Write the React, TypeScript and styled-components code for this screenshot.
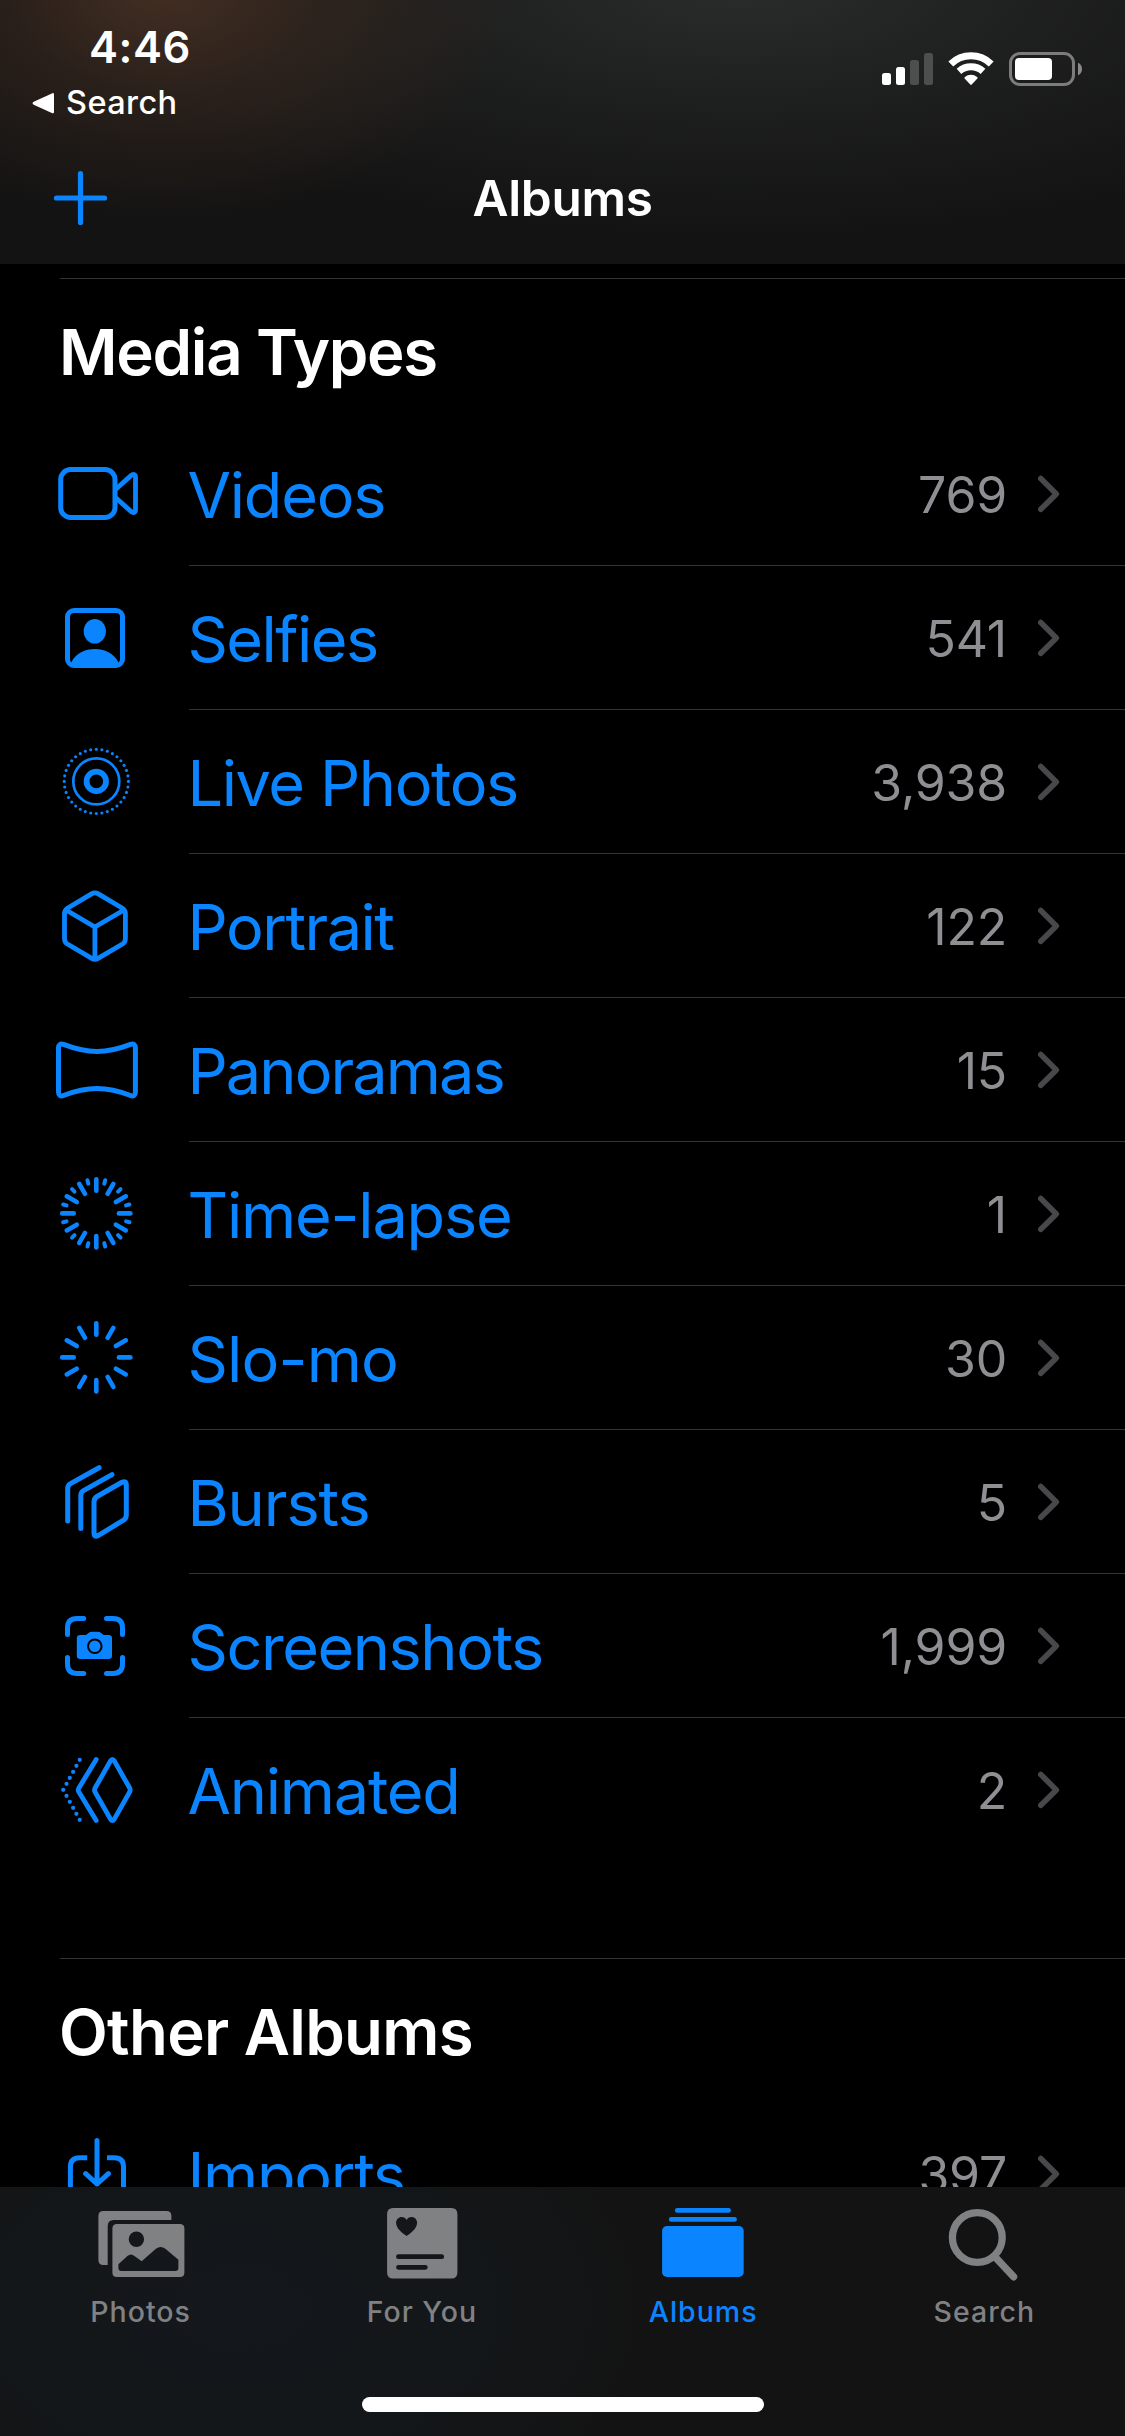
import React from "react";
import styled, { createGlobalStyle } from "styled-components";

const BLUE = "#0a84ff";

const GlobalStyle = createGlobalStyle`
  body { margin: 0; background: #000; }
  * { box-sizing: border-box; }
`;

const Screen = styled.div`
  width: 1125px;
  height: 2436px;
  display: flex;
  flex-direction: column;
  overflow: hidden;
  background: #000;
  color: #fff;
  font-family: Inter, "Liberation Sans", sans-serif;
  white-space: nowrap;
`;

const Header = styled.header`
  flex: none;
  height: 264px;
  display: flex;
  flex-direction: column;
  background:
    radial-gradient(ellipse 350px 235px at 165px -12px, rgba(67, 46, 34, 1), rgba(60, 42, 32, 0.55) 45%, rgba(40, 32, 26, 0) 100%),
    radial-gradient(ellipse 700px 250px at 740px -10px, rgba(42, 44, 43, 1), rgba(38, 40, 39, 0.5) 50%, rgba(28, 29, 28, 0) 100%),
    #131313;
`;

const StatusBar = styled.div`
  height: 132px;
  display: flex;
  justify-content: space-between;
`;

const StatusLeft = styled.div`
  display: flex;
  flex-direction: column;
`;

const Clock = styled.div`
  margin: 21px 0 0 89px;
  line-height: 52px;
  font-size: 43.5px;
  font-weight: 600;
  letter-spacing: 0.6px;
`;

const BackLink = styled.div`
  display: flex;
  align-items: center;
  gap: 11px;
  margin: 9px 0 0 32px;
  line-height: 41px;
  font-size: 32.5px;
  font-weight: 500;
  letter-spacing: 0.4px;
`;

const StatusIcons = styled.svg`
  display: block;
  width: 255px;
  height: 100px;
`;

const NavBar = styled.div`
  height: 132px;
  display: grid;
  grid-template-columns: 189px 1fr 189px;
`;

const PlusIcon = styled.svg`
  display: block;
  width: 189px;
  height: 132px;
`;

const NavTitle = styled.h1`
  margin: 0;
  padding-top: 36px;
  line-height: 60px;
  font-size: 49.5px;
  font-weight: 600;
  letter-spacing: -0.3px;
  text-align: center;
`;

const Content = styled.main`
  flex: 1;
  min-height: 0;
  overflow: hidden;
  padding-top: 14px;
`;

const Section = styled.section<{ $gap?: number }>`
  margin-bottom: ${(p) => p.$gap ?? 0}px;
`;

const SectionTitle = styled.h2<{ $tracking: number }>`
  height: 144px;
  margin: 0 0 0 60px;
  padding-top: 33px;
  border-top: 1px solid #333335;
  line-height: 80px;
  font-size: 63.5px;
  font-weight: 600;
  text-indent: -1px;
  letter-spacing: ${(p) => p.$tracking}px;
`;

const Row = styled.div`
  height: 144px;
  display: grid;
  grid-template-columns: 189px 1fr;
`;

const RowBody = styled.div<{ $last?: boolean }>`
  height: 144px;
  display: flex;
  align-items: flex-start;
  border-bottom: 1px solid ${(p) => (p.$last ? "transparent" : "#333335")};
`;

const RowIcon = styled.svg`
  display: block;
  width: 189px;
  height: 144px;
  fill: none;
  stroke: ${BLUE};
  stroke-width: 5;
  stroke-linecap: round;
  stroke-linejoin: round;
`;

const Label = styled.div<{ $tracking: number }>`
  flex: 1;
  line-height: 146px;
  font-size: 63px;
  text-indent: -1.5px;
  color: ${BLUE};
  letter-spacing: ${(p) => p.$tracking}px;
`;

const Count = styled.div`
  line-height: 146px;
  font-size: 50px;
  letter-spacing: -0.2px;
  color: #8e8e93;
`;

const Chevron = styled.svg`
  display: block;
  width: 118px;
  height: 143px;
`;

const TabBar = styled.nav`
  flex: none;
  height: 249px;
  display: flex;
  flex-direction: column;
  align-items: center;
  background:
    radial-gradient(ellipse 430px 270px at 240px 120px, rgba(20, 24, 29, 1), rgba(19, 24, 27, 0.8) 50%, rgba(19, 19, 19, 0) 100%),
    #131313;
`;

const Tabs = styled.div`
  width: 100%;
  height: 210px;
  display: grid;
  grid-template-columns: repeat(4, 1fr);
`;

const Tab = styled.div<{ $active?: boolean }>`
  display: flex;
  flex-direction: column;
  align-items: center;
  color: ${(p) => (p.$active ? BLUE : "#808183")};
`;

const TabIcon = styled.svg`
  display: block;
  width: 120px;
  height: 104px;
  fill: currentColor;
`;

const TabLabel = styled.div`
  line-height: 41px;
  font-size: 28.5px;
  font-weight: 500;
  letter-spacing: 1px;
`;

const HomeIndicator = styled.div`
  width: 402px;
  height: 15px;
  border-radius: 8px;
  background: #fff;
`;

const spoke = (angle: number, from: number, to: number) => {
  const a = (angle * Math.PI) / 180;
  return {
    x1: 96.3 + from * Math.sin(a),
    y1: 71.4 - from * Math.cos(a),
    x2: 96.3 + to * Math.sin(a),
    y2: 71.4 - to * Math.cos(a),
  };
};

const LongSpokes = () => (
  <>
    {Array.from({ length: 12 }, (_, i) => (
      <line key={i} {...spoke(i * 30, 22.6, 34.1)} strokeWidth={4.6} />
    ))}
  </>
);

const icons: Record<string, React.ReactNode> = {
  videos: (
    <>
      <rect x="60.7" y="47.5" width="54.3" height="48" rx="10" />
      <path d="M116 67 L131 53.6 C133.2 51.7 135.5 52.3 135.5 55 V88 C135.5 90.7 133.2 91.3 131 89.4 L116 76" strokeWidth="4.8" />
    </>
  ),
  selfies: (
    <>
      <rect x="67.5" y="44.5" width="55" height="55" rx="6.5" />
      <ellipse cx="94.8" cy="65.3" rx="11.1" ry="12.3" fill={BLUE} stroke="none" />
      <path d="M71.5 96 C76 87 85 83 94.8 83 C104.6 83 113.6 87 118.2 96 L119.5 100 H70 Z" fill={BLUE} stroke="none" />
    </>
  ),
  live: (
    <>
      {Array.from({ length: 36 }, (_, i) => {
        const p = spoke(i * 10, 0, 32.1);
        return <circle key={i} cx={p.x2} cy={p.y2} r="1.55" fill={BLUE} stroke="none" />;
      })}
      <circle cx="96.3" cy="71.4" r="23" strokeWidth="2.7" />
      <circle cx="96.3" cy="71.4" r="9.7" strokeWidth="5.8" />
    </>
  ),
  portrait: (
    <path
      strokeWidth="4.8"
      d="M91.5 39.9 Q94.9 37.9 98.3 39.9 L122.5 54.3 Q125.4 56.1 125.4 60 V84.5 Q125.4 88.2 122.5 90 L98 104.4 Q94.9 106.4 91.8 104.4 L67.4 90 Q64.5 88.2 64.5 84.5 V60 Q64.5 56.1 67.4 54.3 Z M66 56 L94.9 73 L124 56 M94.9 73 V105"
    />
  ),
  panoramas: (
    <path d="M58.5 50 C58.5 46.5 60.5 45.3 63.5 46.4 C75 50.8 84 53.5 97 53.5 C110 53.5 119 50.8 130.5 46.4 C133.5 45.3 135.4 46.5 135.4 50 V94 C135.4 97.5 133.5 98.6 130.5 97.5 C119 93 110 90.5 97 90.5 C84 90.5 75 93 63.5 97.5 C60.5 98.6 58.5 97.5 58.5 94 Z" />
  ),
  timelapse: (
    <>
      <LongSpokes />
      {Array.from({ length: 12 }, (_, i) => (
        <line key={i} {...spoke(i * 30 + 15, 30.8, 34.3)} strokeWidth={4} />
      ))}
    </>
  ),
  slomo: <LongSpokes />,
  bursts: (
    <path d="M99.1 37.7 L70.5 53.6 Q67.7 55.2 67.7 58.5 V91 M112 44.6 L83.5 60.6 Q80.8 62.2 80.8 65.5 V98.5 M97 66.5 L121.5 52.5 Q126.3 50 126.3 55.2 V85 Q126.3 88.5 123.5 90.2 L98.5 105.3 Q94 107.8 94 103 V72 Q94 68.3 97 66.5 Z" />
  ),
  screenshots: (
    <>
      <path d="M67.5 60.5 V54 Q67.5 44.5 77 44.5 H83.7 M106.5 44.5 H113 Q122.5 44.5 122.5 54 V60.5 M122.5 83.5 V90 Q122.5 99.5 113 99.5 H106.5 M83.7 99.5 H77 Q67.5 99.5 67.5 90 V83.5" />
      <path d="M80.3 61 H86 L88.8 58.7 Q90 57.7 92 57.7 H97.6 Q99.6 57.7 100.8 58.7 L103.6 61 H108.7 Q112 61 112 64.3 V81.7 Q112 85 108.7 85 H80.3 Q76.8 85 76.8 81.7 V64.3 Q76.8 61 80.3 61 Z" fill={BLUE} stroke="none" />
      <circle cx="94.8" cy="72.3" r="6.8" stroke="#000" strokeWidth="2" />
    </>
  ),
  animated: (
    <>
      <path
        strokeWidth="4.8"
        d="M110.5 42.9 Q112.4 40 114.3 42.9 L129.5 69.8 Q130.8 72 129.5 74.2 L114.3 101.1 Q112.4 104 110.5 101.1 L95.2 74.2 Q93.9 72 95.2 69.8 Z M96.2 41.5 L78.9 69.9 Q77.6 72 78.9 74.1 L96.2 102.5"
      />
      {Array.from({ length: 11 }, (_, i) => (
        <circle key={i} cx={63.2 + Math.abs(i - 5) * 3.3} cy={41.8 + i * 6} r="2.1" fill={BLUE} stroke="none" />
      ))}
    </>
  ),
  imports: (
    <>
      <path d="M87.2 55.7 H79.5 Q70.4 55.7 70.4 65 V106 H123.5 V65 Q123.5 55.7 114.5 55.7 H107" strokeLinecap="butt" />
      <path d="M97 38.5 V82 M85.7 71.7 L97 82 L108.4 71.7" />
    </>
  ),
};

type Item = { icon: string; label: string; count: string; tracking: number };

const mediaTypes: Item[] = [
  { icon: "videos", label: "Videos", count: "769", tracking: -1.2 },
  { icon: "selfies", label: "Selfies", count: "541", tracking: -1.55 },
  { icon: "live", label: "Live Photos", count: "3,938", tracking: -1.4 },
  { icon: "portrait", label: "Portrait", count: "122", tracking: -1.5 },
  { icon: "panoramas", label: "Panoramas", count: "15", tracking: -1.9 },
  { icon: "timelapse", label: "Time-lapse", count: "1", tracking: -1.2 },
  { icon: "slomo", label: "Slo-mo", count: "30", tracking: -0.8 },
  { icon: "bursts", label: "Bursts", count: "5", tracking: -1.1 },
  { icon: "screenshots", label: "Screenshots", count: "1,999", tracking: -1.45 },
  { icon: "animated", label: "Animated", count: "2", tracking: -1.2 },
];

const otherAlbums: Item[] = [{ icon: "imports", label: "Imports", count: "397", tracking: -1.3 }];

const AlbumRow = ({ item, last }: { item: Item; last?: boolean }) => (
  <Row>
    <RowIcon viewBox="0 0 189 144">{icons[item.icon]}</RowIcon>
    <RowBody $last={last}>
      <Label $tracking={item.tracking}>{item.label}</Label>
      <Count>{item.count}</Count>
      <Chevron viewBox="0 0 118 143" fill="none" stroke="#48484b" strokeWidth="5.6" strokeLinecap="round" strokeLinejoin="round">
        <path d="M33.8 56.5 L49.3 71.9 L33.8 87.3" />
      </Chevron>
    </RowBody>
  </Row>
);

export default function App() {
  return (
    <>
      <GlobalStyle />
      <Screen>
        <Header>
          <StatusBar>
            <StatusLeft>
              <Clock>4:46</Clock>
              <BackLink>
                <svg width="23" height="24" viewBox="0 0 23 24" fill="#fff">
                  <path d="M20.4 2.2 Q22 1.7 22 3.5 V21 Q22 22.8 20.4 22.2 L1.7 13.7 Q-0.6 12.2 1.7 10.7 Z" />
                </svg>
                Search
              </BackLink>
            </StatusLeft>
            <StatusIcons viewBox="870 0 255 100">
              <rect x="882" y="73" width="9" height="12" rx="2.5" fill="#fff" />
              <rect x="896" y="67" width="9" height="18" rx="2.5" fill="#fff" />
              <rect x="910" y="60" width="9" height="25" rx="2.5" fill="#4d4e4e" />
              <rect x="924" y="53" width="9" height="32" rx="2.5" fill="#4d4e4e" />
              <g fill="none" stroke="#fff" strokeWidth="7">
                <path d="M950.8 63.9 A29.1 29.1 0 0 1 991.2 63.9" />
                <path d="M959 71.3 A18 18 0 0 1 983 71.3" />
              </g>
              <path d="M964.6 78.6 Q963.9 77.7 964.9 77 A9.6 9.6 0 0 1 977.1 77 Q978.1 77.7 977.4 78.6 L971.7 84.6 Q971 85.2 970.3 84.6 Z" fill="#fff" />
              <rect x="1010.5" y="53.5" width="63" height="31" rx="9.5" fill="none" stroke="#7c7c7c" strokeWidth="3" />
              <rect x="1015" y="58" width="37" height="22" rx="4" fill="#fff" />
              <path d="M1078 62.7 Q1082 64.6 1082 69 Q1082 73.4 1078 75.3 Z" fill="#8a8a8a" />
            </StatusIcons>
          </StatusBar>
          <NavBar>
            <PlusIcon viewBox="0 0 189 132" fill="none" stroke={BLUE} strokeWidth="5.2" strokeLinecap="round">
              <path d="M80.5 41.5 V90.5 M56.5 66 H104.5" />
            </PlusIcon>
            <NavTitle>Albums</NavTitle>
          </NavBar>
        </Header>
        <Content>
          <Section $gap={96}>
            <SectionTitle $tracking={-1.3}>Media Types</SectionTitle>
            {mediaTypes.map((m, i) => (
              <AlbumRow key={m.label} item={m} last={i === mediaTypes.length - 1} />
            ))}
          </Section>
          <Section>
            <SectionTitle $tracking={-0.7}>Other Albums</SectionTitle>
            {otherAlbums.map((m) => (
              <AlbumRow key={m.label} item={m} />
            ))}
          </Section>
        </Content>
        <TabBar>
          <Tabs>
            <Tab>
              <TabIcon viewBox="80.6 2187 120 104">
                <path d="M103 2211 H166 Q171 2211 171 2216 V2220 H113.5 Q107.3 2220 107.3 2226.2 V2265 H103 Q98 2265 98 2260 V2216 Q98 2211 103 2211 Z" />
                <path
                  fillRule="evenodd"
                  d="M116.5 2224 H179.5 Q184 2224 184 2228.5 V2272.5 Q184 2277 179.5 2277 H116.5 Q112 2277 112 2272.5 V2228.5 Q112 2224 116.5 2224 Z M128.3 2239.3 A7.7 7.7 0 1 0 143.7 2239.3 A7.7 7.7 0 1 0 128.3 2239.3 Z M118 2264.3 L127 2256 Q130.5 2253 134 2256 L141.3 2261.3 L155.5 2248.8 Q160.3 2245 165 2248.8 L178 2259.7 V2268 Q178 2271 175 2271 H121 Q118 2271 118 2268 Z"
                />
              </TabIcon>
              <TabLabel>Photos</TabLabel>
            </Tab>
            <Tab>
              <TabIcon viewBox="361.9 2187 120 104">
                <path
                  fillRule="evenodd"
                  d="M393 2208 H451.3 Q457.3 2208 457.3 2214 V2272.6 Q457.3 2278.6 451.3 2278.6 H393 Q387 2278.6 387 2272.6 V2214 Q387 2208 393 2208 Z M406.5 2236 C402 2233 396 2228.5 396 2222.8 C396 2219.4 398.6 2217 401.6 2217 C403.8 2217 405.6 2218.2 406.5 2220 C407.4 2218.2 409.2 2217 411.4 2217 C414.4 2217 417 2219.4 417 2222.8 C417 2228.5 411 2233 406.5 2236 Z M398.3 2254.3 H441.7 A2.35 2.35 0 0 1 441.7 2259 H398.3 A2.35 2.35 0 0 1 398.3 2254.3 Z M398.3 2265 H425.3 A2.35 2.35 0 0 1 425.3 2269.7 H398.3 A2.35 2.35 0 0 1 398.3 2265 Z"
                />
              </TabIcon>
              <TabLabel>For You</TabLabel>
            </Tab>
            <Tab $active>
              <TabIcon viewBox="643.1 2187 120 104">
                <rect x="675" y="2208" width="56" height="4.7" rx="2.3" />
                <rect x="669" y="2217" width="68" height="4.7" rx="2.3" />
                <rect x="662.2" y="2226" width="81.6" height="51" rx="4.8" />
              </TabIcon>
              <TabLabel>Albums</TabLabel>
            </Tab>
            <Tab>
              <TabIcon viewBox="924.4 2187 120 104">
                <g fill="none" stroke="currentColor" strokeWidth="7.3" strokeLinecap="round">
                  <circle cx="977.7" cy="2237.5" r="24.9" />
                  <path d="M996 2257.5 L1014 2276.8" />
                </g>
              </TabIcon>
              <TabLabel>Search</TabLabel>
            </Tab>
          </Tabs>
          <HomeIndicator />
        </TabBar>
      </Screen>
    </>
  );
}
